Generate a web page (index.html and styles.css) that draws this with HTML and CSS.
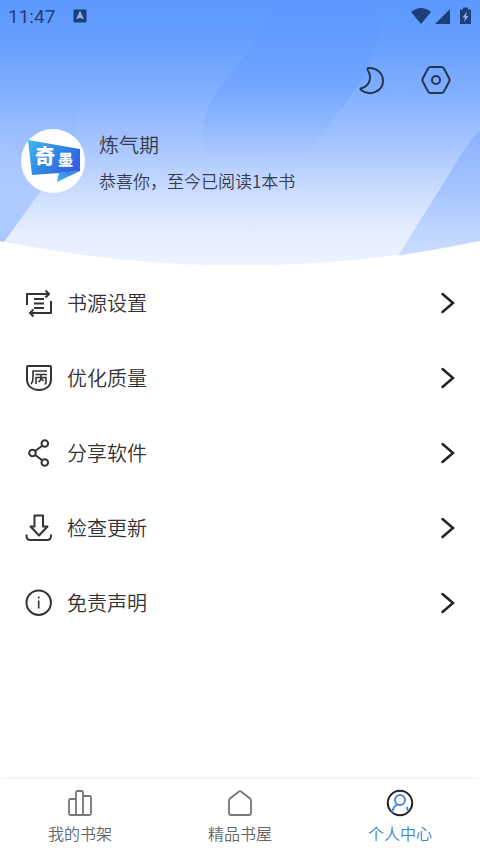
FILE: index.html
```html
<!DOCTYPE html>
<html lang="zh-CN">
<head>
<meta charset="utf-8">
<meta name="viewport" content="width=device-width, initial-scale=1">
<title>个人中心</title>
<link rel="stylesheet" href="styles.css">
</head>
<body>
<div class="app">
  <header class="hero">
    <svg class="hero-bg" viewBox="0 0 480 265" preserveAspectRatio="none" aria-hidden="true">
      <defs>
        <linearGradient id="sky" gradientUnits="userSpaceOnUse" x1="0" y1="0" x2="0" y2="265">
          <stop offset="0" stop-color="#5b97ff"/>
          <stop offset=".15" stop-color="#669fff"/>
          <stop offset=".34" stop-color="#80aeff"/>
          <stop offset=".53" stop-color="#a4c3ff"/>
          <stop offset=".72" stop-color="#cbdcff"/>
          <stop offset=".87" stop-color="#e4edff"/>
          <stop offset="1" stop-color="#eef3ff"/>
        </linearGradient>
        <linearGradient id="band" gradientUnits="userSpaceOnUse" x1="0" y1="0" x2="0" y2="160">
          <stop offset="0" stop-color="#5a97ff" stop-opacity=".3"/>
          <stop offset=".55" stop-color="#5a97ff" stop-opacity=".3"/>
          <stop offset="1" stop-color="#6ca2ff" stop-opacity="0"/>
        </linearGradient>
        <linearGradient id="left" gradientUnits="userSpaceOnUse" x1="0" y1="70" x2="0" y2="242">
          <stop offset="0" stop-color="#6ea3ff" stop-opacity="0"/>
          <stop offset=".4" stop-color="#6ea3ff" stop-opacity=".1"/>
          <stop offset="1" stop-color="#77a8ff" stop-opacity=".55"/>
        </linearGradient>
        <linearGradient id="right" gradientUnits="userSpaceOnUse" x1="0" y1="130" x2="0" y2="258">
          <stop offset="0" stop-color="#6b9fff" stop-opacity=".4"/>
          <stop offset=".5" stop-color="#78a7ff" stop-opacity=".45"/>
          <stop offset="1" stop-color="#8fb7ff" stop-opacity=".35"/>
        </linearGradient>
      </defs>
      <path fill="url(#sky)" d="M0 0H480V241Q240 290 0 241Z"/>
      <path fill="url(#band)" d="M276 0C268 28 246 54 224 82C203 108 197 132 209 160H302L364 78C377 54 382 28 379 0Z"/>
      <path fill="url(#left)" d="M0 70H68C82 98 81 125 63 160L4 242L0 241Z"/>
      <path fill="url(#right)" d="M480 131Q474 135 466 147L398 256Q440 249 480 241Z"/>
    </svg>

    <div class="status">
      <span class="clock">11:47</span>
      <svg class="badge-a" viewBox="0 0 14 14" aria-hidden="true"><rect x=".5" y=".5" width="13" height="13" rx="1" fill="#1d3f78"/><path d="M4.2 10L7 3.800L9.800 10M5.200 8H8.800" fill="none" stroke="#9dc1ff" stroke-width="1.7"/></svg>
      <svg class="signals" viewBox="0 0 62 20" aria-hidden="true">
        <path fill="#1d3f78" d="M1 6Q11 -2 21 6L11 18Z"/>
        <path fill="#1d3f78" d="M25 18L40 3V18Z"/>
        <path fill="#1d3f78" d="M50 3.500H53V1.500H58V3.500H61V18H50Z"/>
        <path fill="#8ab5ff" d="M57 5.500L52.500 11.500H55L54 16L58.500 10H56Z"/>
      </svg>
    </div>

    <div class="tools">
      <button class="tool" type="button" aria-label="夜间模式">
        <svg viewBox="0 0 30 30" aria-hidden="true"><path d="M11.500 3C19 2 26 8 26 16C26 26 13 32 4 25Q2.500 23.600 5 23C12 21 15.500 13 11 5.500Q9.800 3.200 11.500 3Z"/></svg>
      </button>
      <button class="tool" type="button" aria-label="设置">
        <svg viewBox="0 0 30 30" aria-hidden="true"><path d="M9.500 2H20.500Q22 2 22.800 3.300L28 13Q29 15 28 17L22.800 26.700Q22 28 20.500 28H9.500Q8 28 7.200 26.700L2 17Q1 15 2 13L7.200 3.300Q8 2 9.500 2Z"/><circle cx="15" cy="15" r="4"/></svg>
      </button>
    </div>

    <div class="profile">
      <svg class="avatar" viewBox="0 0 64 64" role="img" aria-label="奇墨">
        <defs>
          <linearGradient id="logo" x1="0" y1="0" x2="1" y2=".6"><stop offset="0" stop-color="#42b9ee"/><stop offset=".5" stop-color="#318be6"/><stop offset="1" stop-color="#3161e2"/></linearGradient>
          <linearGradient id="tail" x1="1" y1="0" x2="0" y2="1"><stop offset="0" stop-color="#3273e5"/><stop offset="1" stop-color="#43b8ef"/></linearGradient>
        </defs>
        <circle cx="32" cy="32" r="32" fill="#fff"/>
        <path fill="url(#logo)" d="M7 11L59 20V42L38 44L11 46Z"/>
        <path fill="url(#tail)" d="M38 43.500L59 42L36 53Z"/>
        <text class="logo-big" x="14" y="35">奇</text>
        <text class="logo-small" x="37" y="36">墨</text>
      </svg>
      <div class="who">
        <h1 class="rank">炼气期</h1>
        <p class="progress">恭喜你，至今已阅读1本书</p>
      </div>
    </div>
  </header>

  <main class="menu">
    <a class="row" href="#source">
      <svg class="icon" viewBox="0 0 28 28" aria-hidden="true"><path d="M2 16V5H24M20.500 1.500L24 5L20.500 8.500M26 12V24H5M8.500 20.500L5 24L8.500 27.500M9 10H19M9 14.500H19M9 19H19"/></svg>
      <span class="label">书源设置</span>
      <svg class="chevron" viewBox="0 0 16 24" aria-hidden="true"><path d="M2.500 3L13 12L2.500 21"/></svg>
    </a>
    <a class="row" href="#quality">
      <svg class="icon" viewBox="0 0 28 28" aria-hidden="true"><path d="M3 2H25Q26 2 26 3V15C26 22 21 26 14 26C7 26 2 22 2 15V3Q2 2 3 2Z"/><path class="fine" d="M22 7H8V14Q8 18 6 20M10.500 10.500H22M11 20V13.500H21V19Q21 20 19.500 20M16 10.500V14Q16 16.500 13.500 18M16 14L18.500 17"/></svg>
      <span class="label">优化质量</span>
      <svg class="chevron" viewBox="0 0 16 24" aria-hidden="true"><path d="M2.500 3L13 12L2.500 21"/></svg>
    </a>
    <a class="row" href="#share">
      <svg class="icon" viewBox="0 0 28 28" aria-hidden="true"><circle cx="19.800" cy="4.500" r="3.300"/><circle cx="7.500" cy="14" r="3.300"/><circle cx="19.800" cy="23.500" r="3.300"/><path d="M10.200 12L17.200 6.700M10.200 16L17.200 21.300"/></svg>
      <span class="label">分享软件</span>
      <svg class="chevron" viewBox="0 0 16 24" aria-hidden="true"><path d="M2.500 3L13 12L2.500 21"/></svg>
    </a>
    <a class="row" href="#update">
      <svg class="icon" viewBox="0 0 28 28" aria-hidden="true"><path d="M9.500 1.500H18V12.500H22.500L14 21.500L5.500 12.500H9.500ZM1.500 20.500V22Q1.500 26 5.500 26H22Q26 26 26 22V20.500"/></svg>
      <span class="label">检查更新</span>
      <svg class="chevron" viewBox="0 0 16 24" aria-hidden="true"><path d="M2.500 3L13 12L2.500 21"/></svg>
    </a>
    <a class="row" href="#disclaimer">
      <svg class="icon" viewBox="0 0 28 28" aria-hidden="true"><circle cx="13.700" cy="13.700" r="12.200"/><path class="fine" d="M13.700 11.500V19.500M13.700 7.500V9.500"/></svg>
      <span class="label">免责声明</span>
      <svg class="chevron" viewBox="0 0 16 24" aria-hidden="true"><path d="M2.500 3L13 12L2.500 21"/></svg>
    </a>
  </main>

  <nav class="tabs">
    <a class="tab" href="#shelf">
      <svg class="tab-icon" viewBox="0 0 28 28" aria-hidden="true"><path d="M10 26V3.500Q10 2 11.500 2H15.500Q17 2 17 3.500V26M10 10H4.500Q3 10 3 11.500V24.500Q3 26 4.500 26H23.500Q25 26 25 24.500V8.500Q25 7 23.500 7H17"/></svg>
      <span>我的书架</span>
    </a>
    <a class="tab" href="#store">
      <svg class="tab-icon" viewBox="0 0 28 28" aria-hidden="true"><path d="M13 2.500Q14 1.700 15 2.500L24 9.500Q25 10.300 25 11.500V24Q25 26 23 26H5Q3 26 3 24V11.500Q3 10.300 4 9.500Z"/></svg>
      <span>精品书屋</span>
    </a>
    <a class="tab active" href="#me" aria-current="page">
      <svg class="tab-icon" viewBox="0 0 28 28" aria-hidden="true"><circle class="ring" cx="14" cy="14" r="12.200"/><path d="M6 23.500Q7 18 11 15.500M20.500 18Q22 19.500 22 22"/><circle cx="14" cy="11" r="5"/></svg>
      <span>个人中心</span>
    </a>
  </nav>
</div>
</body>
</html>
```
FILE: styles.css
```css
* {
  box-sizing: border-box;
}

body {
  margin: 0;
  background: #fff;
  color: #333;
  font-family: "Noto Sans CJK SC", sans-serif;
  font-weight: 350;
}

a {
  color: inherit;
  text-decoration: none;
}

svg {
  display: block;
  flex: none;
}

.app {
  display: flex;
  flex-direction: column;
  min-height: 100vh;
}

.hero {
  position: relative;
  padding-bottom: 72px;
}

.hero-bg {
  position: absolute;
  inset: 0;
  width: 100%;
  height: 100%;
  z-index: -1;
}

.status {
  display: flex;
  align-items: center;
  height: 32px;
  padding: 0 8px;
}

.clock {
  color: #1d3f78;
  font-family: Roboto, sans-serif;
  font-size: 19px;
  font-weight: 400;
}

.badge-a {
  width: 14px;
  height: 14px;
  margin-left: 18px;
}

.signals {
  width: 62px;
  height: 20px;
  margin-left: auto;
}

.tools {
  display: flex;
  justify-content: flex-end;
  gap: 34px;
  padding: 33px 29px 0;
}

.tool {
  padding: 0;
  border: 0;
  background: none;
}

.tool svg {
  width: 30px;
  height: 30px;
  fill: none;
  stroke: #25364f;
  stroke-width: 2;
  stroke-linejoin: round;
}

.profile {
  display: flex;
  align-items: center;
  gap: 14px;
  padding: 34px 21px 0;
}

.avatar {
  width: 64px;
  height: 64px;
}

.avatar text {
  fill: #fff;
  font-weight: 900;
}

.logo-big {
  font-size: 20px;
}

.logo-small {
  font-size: 15px;
}

.who {
  display: flex;
  flex-direction: column;
  gap: 12px;
  padding-top: 4px;
  color: #333b4a;
}

.rank,
.progress {
  margin: 0;
  font-weight: 350;
  line-height: 24px;
}

.rank {
  font-size: 20px;
}

.progress {
  font-size: 17px;
}

.menu {
  flex: 1;
}

.row {
  display: flex;
  align-items: center;
  gap: 14px;
  height: 75px;
  padding: 0 24px 0 25px;
}

.icon {
  width: 28px;
  height: 28px;
  fill: none;
  stroke: #333;
  stroke-width: 2;
  stroke-linejoin: round;
}

.icon .fine {
  stroke-width: 1.6;
}

.label {
  flex: 1;
  font-size: 20px;
}

.chevron {
  width: 16px;
  height: 24px;
  fill: none;
  stroke: #222;
  stroke-width: 2.5;
  stroke-linecap: round;
}

.tabs {
  display: flex;
  height: 75px;
  border-top: 1px solid #f6f6f6;
  box-shadow: 0 -1px 2px #f6f6f6;
}

.tab {
  display: flex;
  flex: 1;
  flex-direction: column;
  align-items: center;
  gap: 4px;
  padding-top: 10px;
  color: #666;
  font-size: 16px;
  line-height: 24px;
}

.tab-icon {
  width: 28px;
  height: 28px;
  fill: none;
  stroke: #777;
  stroke-width: 1.8;
  stroke-linejoin: round;
}

.active {
  color: #4080cf;
}

.active .tab-icon {
  stroke: #4a86dc;
  stroke-width: 2;
}

.active .ring {
  stroke: #222;
}
```
